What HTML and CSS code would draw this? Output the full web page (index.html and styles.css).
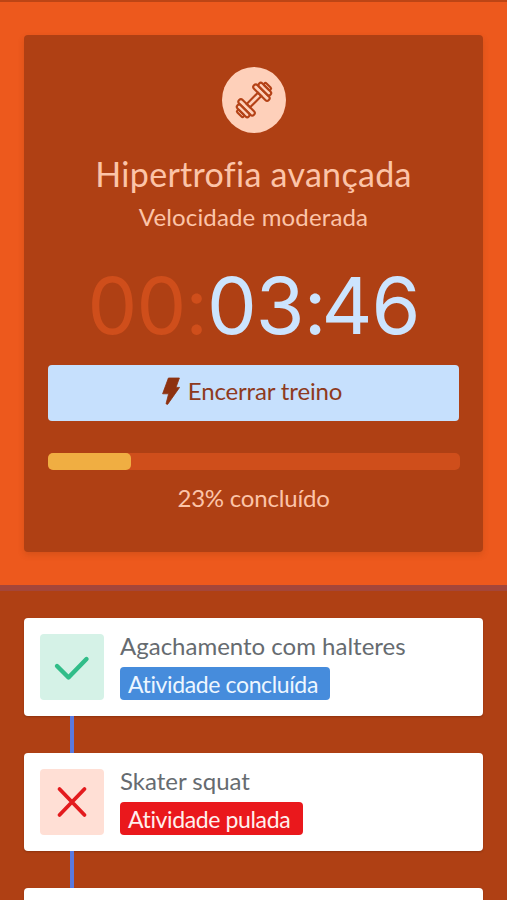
FILE: index.html
```
<!DOCTYPE html>
<html lang="pt-BR">
<head>
<meta charset="utf-8">
<title>Treino</title>
<link rel="stylesheet" href="styles.css">
</head>
<body>
<main class="screen">
  <section class="hero">
    <div class="session">
      <div class="session-icon">
        <svg width="64" height="66" viewBox="0 0 64 66" fill="none" stroke="#b44217" stroke-width="2.1">
          <g transform="translate(32 33) rotate(-45)">
            <rect x="-8" y="-2.4" width="16" height="4.8"/>
            <rect x="-13" y="-10.5" width="5" height="21" rx="2.5"/>
            <rect x="-17.6" y="-8" width="4.6" height="16" rx="2.3"/>
            <rect x="-20.6" y="-4.4" width="3" height="8.8" rx="1.5"/>
            <rect x="8" y="-10.5" width="5" height="21" rx="2.5"/>
            <rect x="13" y="-8" width="4.6" height="16" rx="2.3"/>
            <rect x="17.6" y="-4.4" width="3" height="8.8" rx="1.5"/>
          </g>
        </svg>
      </div>
      <h1 class="title">Hipertrofia avançada</h1>
      <p class="pace">Velocidade moderada</p>
      <div class="timer"><span class="idle">00:</span><span>03<span class="colon">:</span>46</span></div>
      <button class="finish">
        <svg width="18" height="28" viewBox="0 0 18 28"><path d="M6.4 1H17.4L14 10.4H17.6L5.6 27.4L4 26.8L6.6 16.8H.6Z" fill="#8e3210" stroke="#8e3210" stroke-width=".8" stroke-linejoin="round"/></svg>
        <span>Encerrar treino</span>
      </button>
      <div class="track"><div class="fill"></div></div>
      <p class="percent">23% concluído</p>
    </div>
  </section>
  <section class="list">
    <article class="item">
      <div class="state done"><svg width="64" height="66" viewBox="0 0 64 66"><path d="M17 32L28.5 43.5L46.5 25" fill="none" stroke="#31bd89" stroke-width="4.4" stroke-linecap="round" stroke-linejoin="round"/></svg></div>
      <div class="info"><h2 class="name">Agachamento com halteres</h2><span class="tag tag-done"><span>Atividade concluída</span></span></div>
    </article>
    <div class="link"></div>
    <article class="item">
      <div class="state skipped"><svg width="64" height="66" viewBox="0 0 64 66"><path d="M19.5 20L44.5 46M44.5 20L19.5 46" fill="none" stroke="#e31b1e" stroke-width="3.8" stroke-linecap="round"/></svg></div>
      <div class="info"><h2 class="name">Skater squat</h2><span class="tag tag-skipped"><span>Atividade pulada</span></span></div>
    </article>
    <div class="link"></div>
    <article class="item"></article>
  </section>
</main>
</body>
</html>
```
FILE: styles.css
```
* { box-sizing: border-box; }
body { margin: 0; background: #af4014; font-family: Lato, "Liberation Sans", sans-serif; font-weight: 400; font-variant-ligatures: none; }
h1, h2, p { margin: 0; font-weight: 400; white-space: nowrap; }
svg { display: block; }
.screen { height: 900px; overflow: hidden; border-top: 2px solid #bd4515; }
.hero { height: 589px; padding: 33px 24px 0; background: #ed591d; border-bottom: 6px solid #a4463a; }
.session { height: 517px; padding: 32px 24px 0; display: flex; flex-direction: column; align-items: center; background: #af4014; border-radius: 4px; box-shadow: 0 3px 6px rgba(120, 50, 10, .2); width: 459px; }
.session-icon { width: 64px; height: 66px; border-radius: 50%; background: #fed0ba; flex: none; }
.title { margin-top: 19px; font-size: 34px; line-height: 44px; color: #fcc4a8; letter-spacing: .3px; }
.pace { margin-top: 5px; font-size: 24px; line-height: 32px; color: #fcc4a8; letter-spacing: .15px; }
.timer { margin-top: 20px; font: 370 79px/105px Inter, sans-serif; height: 112px; color: #cce4fe; letter-spacing: -1px; white-space: nowrap; }
.colon { letter-spacing: -5px; }
.idle { color: #cf4e1b; }
.finish { width: 411px; height: 56px; flex: none; margin: 0 auto; padding: 0 3px 4px 0; border: 0; border-radius: 4px; background: #c6e0fd; display: flex; align-items: center; justify-content: center; gap: 8px; font: 24px/32px Lato, "Liberation Sans", sans-serif; letter-spacing: -.15px; color: #8e3a20; }
.track { width: 412px; height: 17px; flex: none; margin-top: 32px; border-radius: 5px; background: #cf4e1b; }
.fill { width: 83px; height: 100%; border-radius: 5px; background: #f0ae42; }
.percent { margin-top: 12px; font-size: 24px; line-height: 32px; color: #fcc4a8; letter-spacing: -.2px; }
.list { padding: 27px 24px 0; }
.item { width: 459px; height: 98px; padding: 16px; display: flex; gap: 16px; background: #fff; border-radius: 4px; box-shadow: 0 1px 2px rgba(80, 25, 0, .35); }
.state { width: 64px; height: 66px; flex: none; border-radius: 4px; }
.done { background: #d5f2e7; }
.skipped { background: #ffdfd5; }
.info { display: flex; flex-direction: column; align-items: flex-start; }
.name { height: 33px; font-size: 24px; line-height: 23px; color: #666b70; }
.tag { height: 33px; padding-left: 8px; border-radius: 4px; font-size: 23px; line-height: 34px; letter-spacing: -.37px; white-space: nowrap; }
.tag-done { width: 210px; background: #468cdc; color: #edf6ff; }
.tag-skipped { width: 183px; background: #ea181c; color: #fff0ee; }
.link { width: 4px; height: 37px; margin-left: 46px; background: #5979df; }
```
